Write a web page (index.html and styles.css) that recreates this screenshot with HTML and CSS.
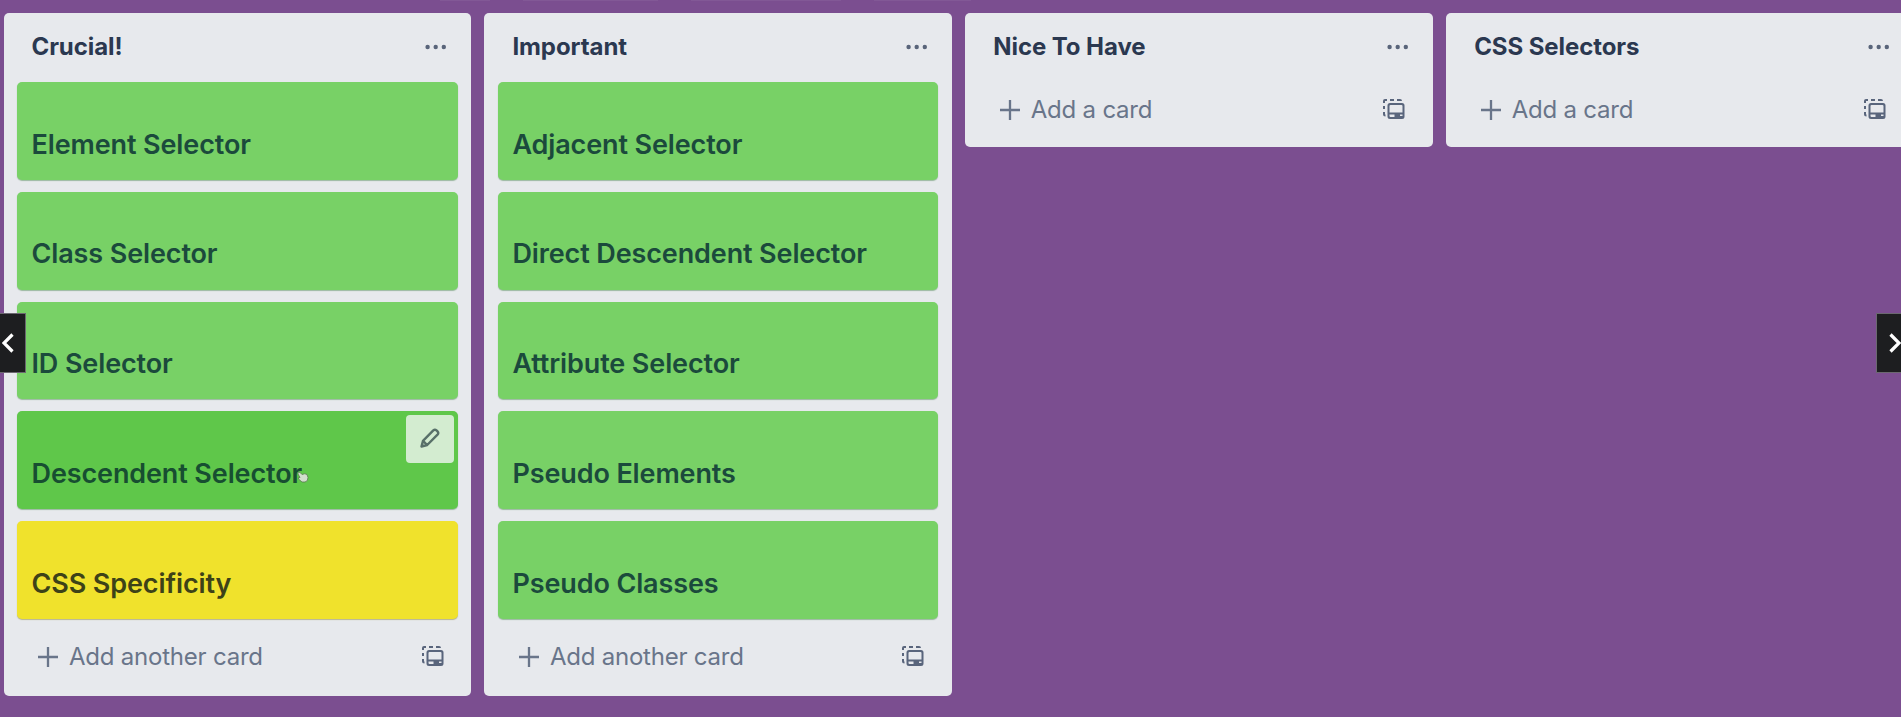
FILE: index.html
```
<!DOCTYPE html>
<html lang="en">
<head>
<meta charset="utf-8">
<title>CSS board</title>
<link rel="stylesheet" href="styles.css">
</head>
<body>
<svg width="0" height="0" class="defs">
  <symbol id="dots" viewBox="0 0 22 6"><circle cx="2.6" cy="3" r="2.2"/><circle cx="10.7" cy="3" r="2.2"/><circle cx="18.8" cy="3" r="2.2"/></symbol>
  <symbol id="plus" viewBox="0 0 20 20"><path d="M10 0v20M0 10h20" fill="none" stroke="currentColor" stroke-width="2.3"/></symbol>
  <symbol id="template" viewBox="0 0 22 21">
    <path d="M1 4V2q0-1 1-1h2M7 1h4M14 1h3q1 0 1 1M1 7v3M1 13v2q0 1.500 1.500 1.500" fill="none" stroke="currentColor" stroke-width="2"/>
    <path fill="currentColor" fill-rule="evenodd" d="M7 4h12q2.500 0 2.500 2.500v11q0 2.500-2.500 2.500H7q-2.500 0-2.500-2.500v-11Q4.500 4 7 4zm.5 2q-1 0-1 1v6.500h13V7q0-1-1-1zM6.500 15.500v1.500q0 1 1 1h4v-2.500zM17 15.500v1.500h2.500v-1.500z"/>
  </symbol>
</svg>
<nav class="toolbar"><span></span><span></span><span></span><span></span></nav>
<main class="board">
  <section class="list">
    <header><h2>Crucial!</h2><svg class="dots"><use href="#dots"/></svg></header>
    <div class="cards">
      <article class="card">Element Selector</article>
      <article class="card">Class Selector</article>
      <article class="card">ID Selector</article>
      <article class="card active">Descendent Selector
        <span class="edit"><svg viewBox="0 0 20 20"><path d="M1.500 18.500 3 12.800 13.300 2.400q1.600-1.400 3.200 0l1 1q1.500 1.600 0 3.200L7.200 17zM3 12.800 7.200 17"/></svg></span>
        <svg class="pointer" viewBox="0 0 12 12"><path d="M1 1.500q1-1 2 0l2 2q3-1.500 5 0l1 3q0 4-3 4.500H5L1.500 8q-.5-2 1.500-1.500L1 3z"/></svg>
      </article>
      <article class="card yellow">CSS Specificity</article>
    </div>
    <footer><svg class="plus"><use href="#plus"/></svg><span>Add another card</span><svg class="template"><use href="#template"/></svg></footer>
  </section>
  <section class="list">
    <header><h2>Important</h2><svg class="dots"><use href="#dots"/></svg></header>
    <div class="cards">
      <article class="card">Adjacent Selector</article>
      <article class="card">Direct Descendent Selector</article>
      <article class="card">Attribute Selector</article>
      <article class="card">Pseudo Elements</article>
      <article class="card">Pseudo Classes</article>
    </div>
    <footer><svg class="plus"><use href="#plus"/></svg><span>Add another card</span><svg class="template"><use href="#template"/></svg></footer>
  </section>
  <section class="list">
    <header><h2>Nice To Have</h2><svg class="dots"><use href="#dots"/></svg></header>
    <footer><svg class="plus"><use href="#plus"/></svg><span>Add a card</span><svg class="template"><use href="#template"/></svg></footer>
  </section>
  <section class="list">
    <header><h2>CSS Selectors</h2><svg class="dots"><use href="#dots"/></svg></header>
    <footer><svg class="plus"><use href="#plus"/></svg><span>Add a card</span><svg class="template"><use href="#template"/></svg></footer>
  </section>
</main>
<button class="arrow prev" aria-label="Previous"><svg viewBox="0 0 12 20"><path d="M10.500 1.500 2 10l8.500 8.500"/></svg></button>
<button class="arrow next" aria-label="Next"><svg viewBox="0 0 12 20"><path d="M1.500 1.500 10 10l-8.500 8.500"/></svg></button>
</body>
</html>
```
FILE: styles.css
```
* { box-sizing: border-box; }
body {
  margin: 0;
  height: 717px;
  overflow: hidden;
  position: relative;
  background: #7b4e90;
  font-family: Inter, "Liberation Sans", sans-serif;
}
.defs { position: absolute; }
.toolbar {
  display: grid;
  grid-template-columns: 50px 135px 150px 97px;
  column-gap: 33px;
  padding-left: 440px;
  height: 1px;
}
.toolbar span { background: #825896; }
.board {
  display: flex;
  align-items: flex-start;
  gap: 13.300px;
  padding: 12px 0 0 3.500px;
}
.list {
  flex: 0 0 467.600px;
  background: #e7e9ed;
  border-radius: 5px;
}
.list header {
  height: 69px;
  padding: 0 24px 2px 28px;
  display: flex;
  align-items: center;
  justify-content: space-between;
}
.list h2 {
  margin: 0;
  padding-top: 1px;
  font-size: 24px;
  line-height: 30px;
  font-weight: 650;
  letter-spacing: -.08px;
  color: #2b3850;
}
.dots { width: 22px; height: 6px; fill: #59647a; }
.cards {
  display: grid;
  gap: 12px;
  padding: 0 13.500px;
  margin-bottom: 10.500px;
}
.card {
  position: relative;
  height: 97.800px;
  padding: 45.500px 14.500px 0;
  border-radius: 5px;
  background: #78d166;
  box-shadow: 0 1px 1px #9bb8a0;
  color: #1b4a3c;
  font-size: 27px;
  font-weight: 600;
  letter-spacing: -.12px;
  line-height: 34px;
  white-space: nowrap;
}
.card.active { background: #5fc74a; color: #174e31; }
.card.yellow { background: #f0e22c; color: #3d4218; box-shadow: 0 1px 1px #b8b58e; }
.edit {
  position: absolute;
  top: 4px;
  right: 4px;
  width: 48px;
  height: 48px;
  border-radius: 4px;
  background: #d3ecd0;
  display: grid;
  place-items: center;
}
.edit svg {
  width: 20px;
  height: 20px;
  margin-bottom: 3px;
  fill: none;
  stroke: #587069;
  stroke-width: 2.400;
  stroke-linejoin: round;
}
.pointer {
  position: absolute;
  left: 280px;
  top: 60px;
  width: 12px;
  height: 12px;
  fill: #d2dfcd;
  stroke: #597b50;
  stroke-width: .8;
}
.list footer {
  height: 65px;
  padding: 0 27.500px 10px 34.500px;
  display: flex;
  align-items: center;
  color: #69758a;
  font-size: 24px;
  letter-spacing: -.22px;
}
.cards + footer { height: 67px; padding-bottom: 12px; }
.plus { width: 20px; height: 20px; margin-right: 11px; }
.template { width: 22px; height: 21px; margin-left: auto; color: #59657c; }
.arrow {
  position: absolute;
  top: 313px;
  width: 26px;
  height: 60px;
  padding: 0;
  background: #1d1e20;
  border: 1px solid #6b6870;
  display: flex;
  align-items: center;
}
.arrow svg { width: 12px; height: 20px; fill: none; stroke: #fff; stroke-width: 3.200; }
.prev { left: 0; border-left: 0; padding-left: 2px; }
.next { right: 0; width: 25px; border-right: 0; padding-left: 12px; }
```
